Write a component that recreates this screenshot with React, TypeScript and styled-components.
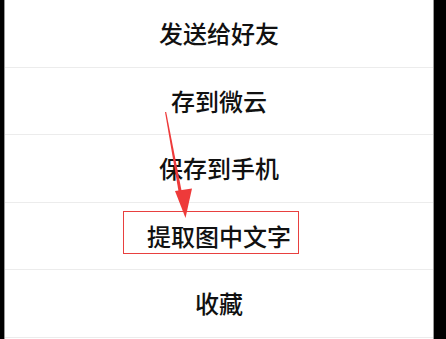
import React from 'react'
import styled, { createGlobalStyle } from 'styled-components'

const GlobalStyle = createGlobalStyle`
  html, body {
    margin: 0;
    padding: 0;
    background: #000;
  }
  body {
    font-family: "Noto Sans CJK SC", "Noto Sans", sans-serif;
  }
`

const items = ['发送给好友', '存到微云', '保存到手机', '提取图中文字', '收藏']

const App = () => {
  return (
    <Page>
      <GlobalStyle />
      <Sheet>
        {items.map((label) => (
          <Row key={label}>
            <Label>{label}</Label>
          </Row>
        ))}
      </Sheet>
      <Highlight />
      <Arrow width="446" height="339" viewBox="0 0 446 339">
        {/* shaft gets a bit wider toward the head */}
        <polygon points="165,112 166.2,112 182.6,196 179.4,196.5" fill="#ee3a3a" />
        <polygon points="175,191 192,188.5 185.5,218" fill="#ee3a3a" />
      </Arrow>
    </Page>
  )
}

export default App

const Page = styled.div`
  position: relative;
  width: 446px;
  height: 339px;
  overflow: hidden;
  background: #000;
`

const Sheet = styled.div`
  margin-left: 4px;
  width: 430px;
  height: 339px;
  box-sizing: border-box;
  background: #fff;
  border-left: 1px solid #9a9a9a;
  border-right: 1px solid #9a9a9a;
  display: flex;
  flex-direction: column;
`

const Row = styled.div`
  height: 67.5px;
  flex: none;
  box-sizing: border-box;
  border-bottom: 1px solid #ececec;
  display: flex;
  align-items: center;
  justify-content: center;
`

const Label = styled.span`
  font-size: 24px;
  font-weight: 500;
  line-height: 1;
  color: #111;
`

const Highlight = styled.div`
  position: absolute;
  left: 123px;
  top: 211px;
  width: 176px;
  height: 43px;
  box-sizing: border-box;
  border: 1.5px solid #e8403f;
`

const Arrow = styled.svg`
  position: absolute;
  left: 0;
  top: 0;
  pointer-events: none;
`
